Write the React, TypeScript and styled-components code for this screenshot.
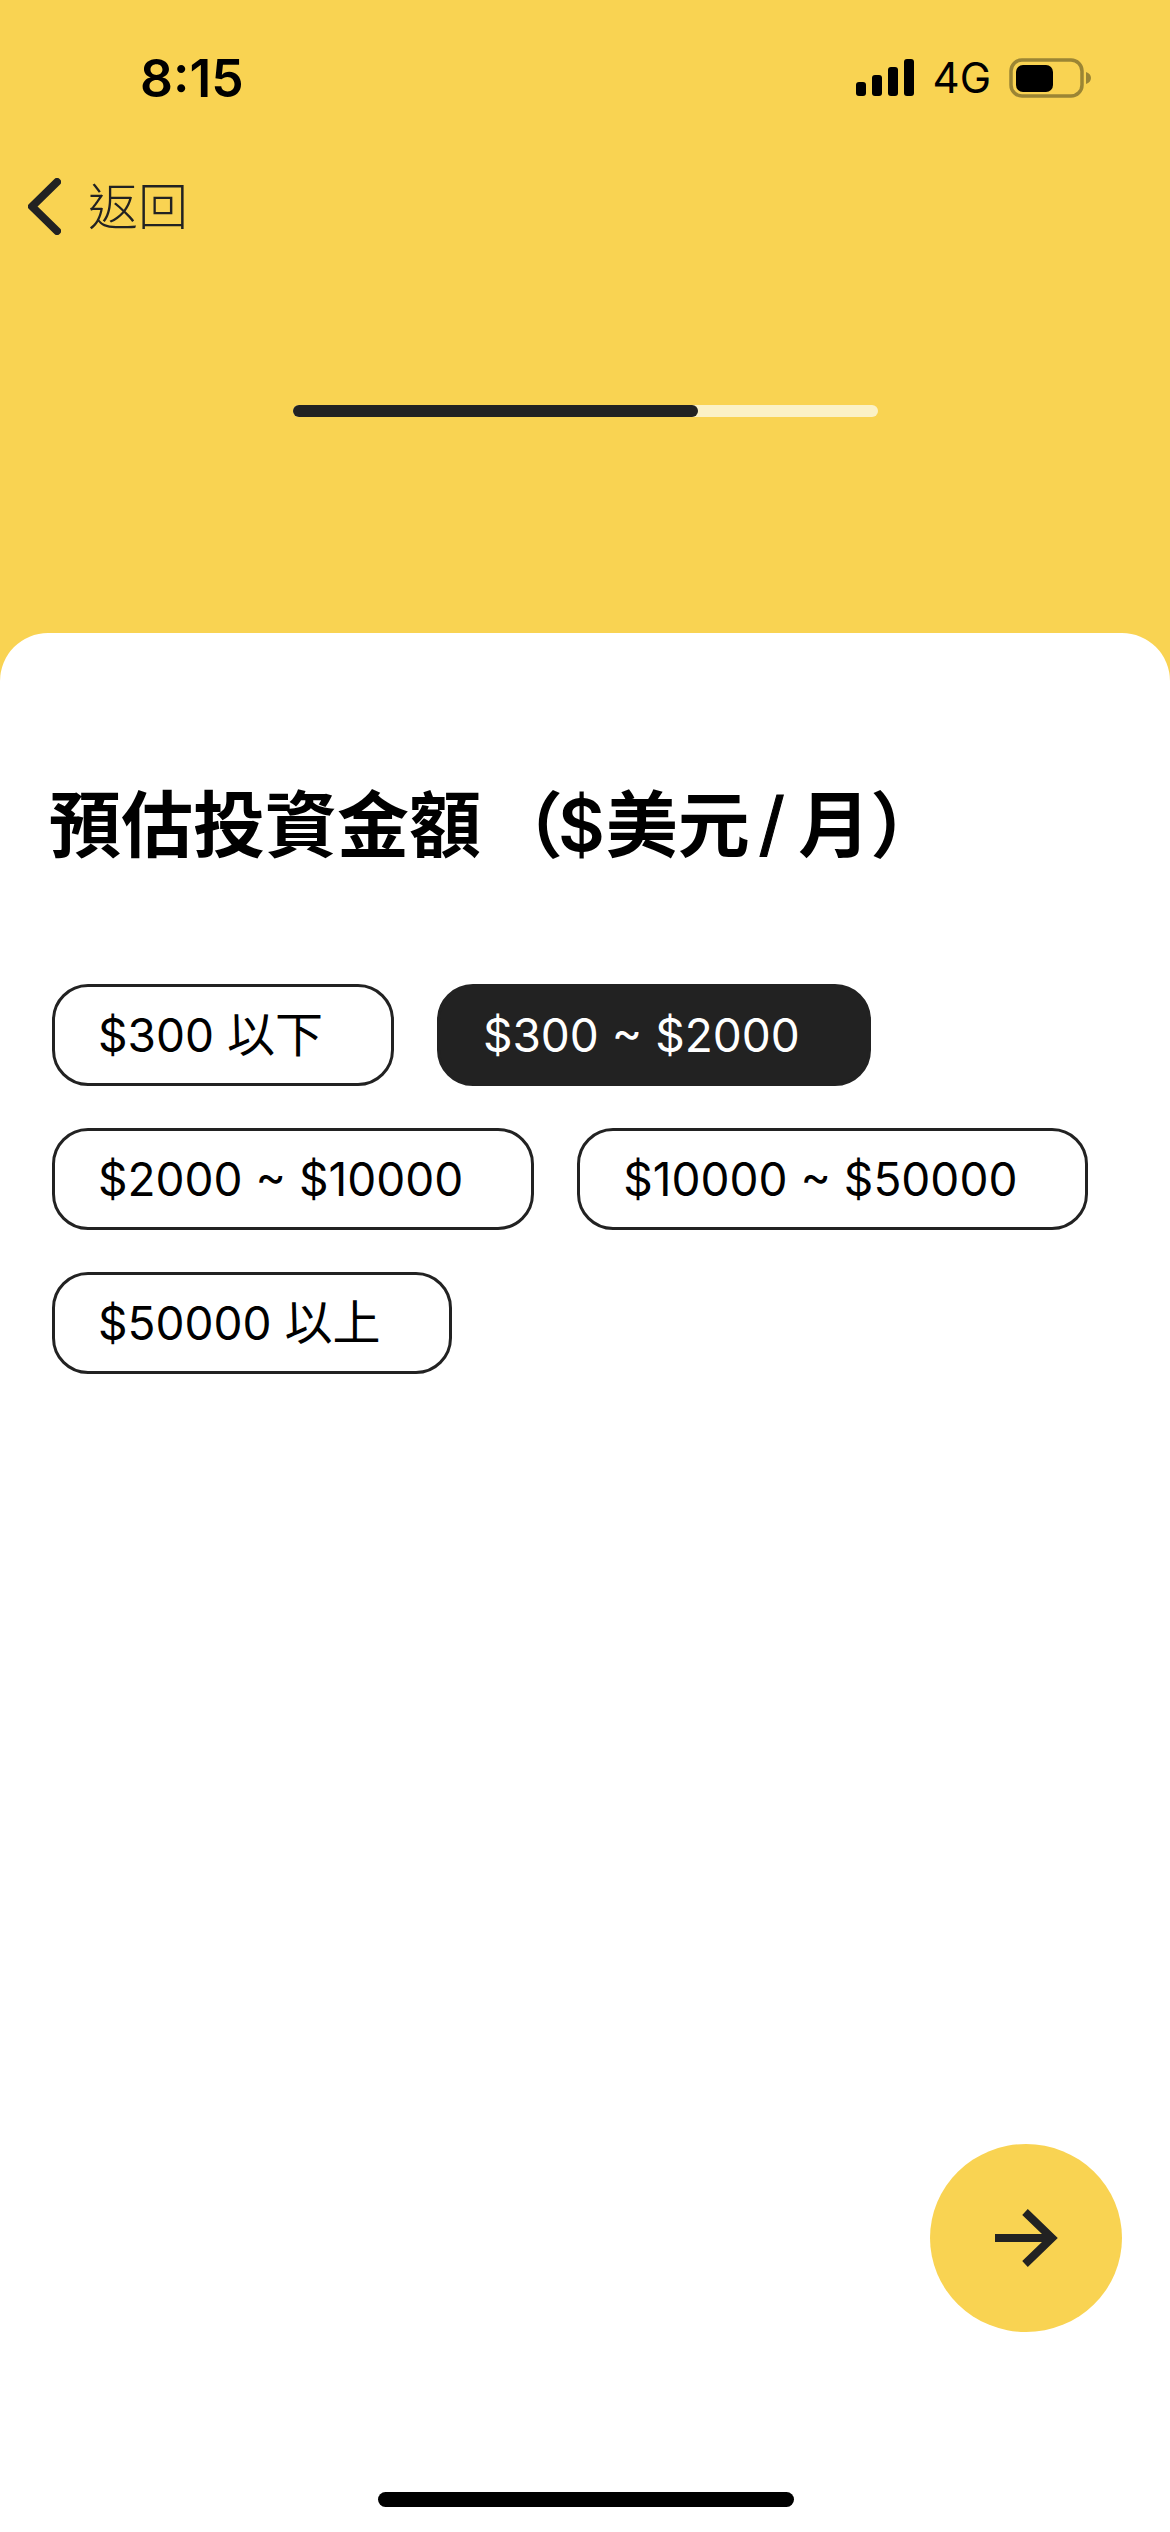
import React from "react";
import styled, { createGlobalStyle } from "styled-components";

const Y = "#f9d352";
const D = "#222222";
const FONT = `"Inter", "Noto Sans CJK TC", sans-serif`;

const Global = createGlobalStyle`
  html, body { margin: 0; padding: 0; background: #fff; }
  * { box-sizing: border-box; }
`;

const Page = styled.div`
  width: 1170px;
  height: 2532px;
  display: flex;
  flex-direction: column;
  background: ${Y};
  font-family: ${FONT};
  overflow: hidden;
`;
const Header = styled.header`
  height: 633px;
  flex: none;
  display: flex;
  flex-direction: column;
`;
const StatusBar = styled.div`
  height: 156px;
  flex: none;
  display: flex;
  align-items: flex-start;
  justify-content: space-between;
  padding: 48px 79px 0 140px;
`;
const Time = styled.span`
  font-size: 51.5px;
  line-height: 60px;
  font-weight: 600;
  color: #000;
`;
const StatusIcons = styled.div`
  display: flex;
  align-items: center;
  height: 60px;
`;
const Network = styled.span`
  font-size: 42px;
  line-height: 60px;
  color: #000;
  margin: 0 18px 0 19px;
`;
const NavRow = styled.div`
  display: flex;
  align-items: center;
  gap: 27px;
  padding-left: 28px;
  height: 100px;
  flex: none;
`;
const BackLabel = styled.span`
  font-size: 50px;
  line-height: 60px;
  font-weight: 300;
  color: ${D};
  position: relative;
  top: 1px;
`;
const Track = styled.div`
  width: 585px;
  height: 12px;
  margin: 149px auto 0 293px;
  border-radius: 6px;
  background: #fbf1c6;
  flex: none;
`;
const Fill = styled.div`
  height: 100%;
  border-radius: 6px;
  background: ${D};
`;
const Card = styled.main`
  flex: 1;
  background: #fff;
  border-radius: 48px 48px 0 0;
  display: flex;
  flex-direction: column;
  padding: 142px 48px 0 52px;
`;
const Title = styled.h1`
  margin: 0 0 109px -3px;
  font-size: 72px;
  line-height: 100px;
  font-weight: 700;
  color: #000;
  white-space: nowrap;
`;
const OpenParen = styled.span`
  margin: 0 -5px 0 10px;
`;
const Dollar = styled.span`
  font-weight: 600;
  margin-right: 1px;
`;
const Slash = styled.span`
  font-family: "Liberation Sans", sans-serif;
  font-size: 84px;
  line-height: 60px;
  font-weight: 400;
  -webkit-text-stroke: 1px #000;
  margin: 0 15px 0 10px;
  display: inline-block;
  transform: translateY(5px);
`;
const Chips = styled.div`
  display: flex;
  flex-wrap: wrap;
  gap: 42px 43px;
`;
const Chip = styled.button<{ $active?: boolean }>`
  height: 102px;
  padding: 0 68px 0 43px;
  border: 3px solid ${D};
  border-radius: 36px;
  background: ${(p) => (p.$active ? D : "#fff")};
  color: ${(p) => (p.$active ? "#fff" : "#000")};
  font-family: ${FONT};
  font-size: 46px;
  line-height: 60px;
  font-weight: 400;
  white-space: nowrap;
`;
const ChipSuffix = styled.span`
  font-size: 48px;
`;
const Footer = styled.div`
  margin-top: auto;
  display: flex;
  flex-direction: column;
`;
const Fab = styled.button`
  align-self: flex-end;
  width: 192px;
  height: 188px;
  margin: 0 0 160px;
  border: none;
  border-radius: 50%;
  background: ${Y};
  display: flex;
  align-items: center;
  justify-content: center;
  padding: 0;
`;
const HomeBar = styled.div`
  width: 416px;
  height: 15px;
  border-radius: 8px;
  background: #000;
  margin: 0 0 25px 326px;
`;

const options = [
  { amount: "$300 ", suffix: "以下" },
  { amount: "$300 ~ $2000" },
  { amount: "$2000 ~ $10000" },
  { amount: "$10000 ~ $50000" },
  { amount: "$50000 ", suffix: "以上" },
];

export default function App() {
  return (
    <Page>
      <Global />
      <Header>
        <StatusBar>
          <Time>8:15</Time>
          <StatusIcons>
            <svg width="58" height="38" viewBox="0 0 58 38">
              <rect x="0" y="23" width="10" height="14" rx="3" fill="#000" />
              <rect x="16" y="16" width="10" height="21" rx="3" fill="#000" />
              <rect x="32" y="8" width="10" height="29" rx="3" fill="#000" />
              <rect x="48" y="0" width="10" height="37" rx="3" fill="#000" />
            </svg>
            <Network>4G</Network>
            <svg width="82" height="40" viewBox="0 0 82 40">
              <rect x="2" y="2" width="71" height="36" rx="11" fill="none" stroke="#9b8534" strokeWidth="3.5" />
              <rect x="7" y="7" width="37" height="27" rx="7" fill="#000" />
              <path d="M77 14c3 1 5 3 5 6s-2 5-5 6z" fill="#9b8534" />
            </svg>
          </StatusIcons>
        </StatusBar>
        <NavRow>
          <svg width="33" height="57" viewBox="0 0 33 57">
            <path d="M29 4 4 28.5 29 53" fill="none" stroke={D} strokeWidth="8" strokeLinecap="round" strokeLinejoin="round" />
          </svg>
          <BackLabel>返回</BackLabel>
        </NavRow>
        <Track>
          <Fill style={{ width: `${(405 / 585) * 100}%` }} />
        </Track>
      </Header>
      <Card>
        <Title>
          預估投資金額<OpenParen>（</OpenParen><Dollar>$</Dollar>美元<Slash>/</Slash>月）
        </Title>
        <Chips>
          {options.map((o, i) => (
            <Chip key={o.amount} $active={i === 1}>
              {o.amount}
              {o.suffix && <ChipSuffix>{o.suffix}</ChipSuffix>}
            </Chip>
          ))}
        </Chips>
        <Footer>
          <Fab aria-label="下一步">
            <svg width="66" height="60" viewBox="0 0 66 60">
              <path d="M2 30H58M32 4 59 30 32 56" fill="none" stroke={D} strokeWidth="8" />
            </svg>
          </Fab>
          <HomeBar />
        </Footer>
      </Card>
    </Page>
  );
}
